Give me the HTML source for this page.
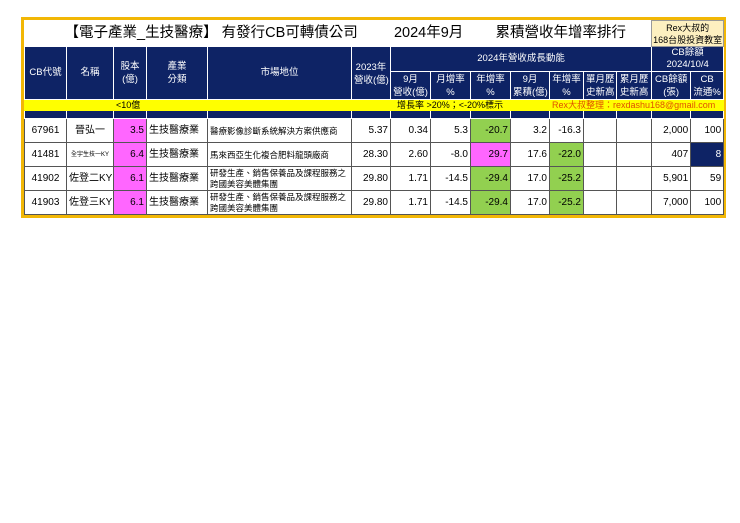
<!DOCTYPE html>
<html><head><meta charset="utf-8"><style>
body{margin:0;width:740px;height:523px;background:#fff;position:relative;font-family:"Liberation Sans","Noto Sans CJK TC",sans-serif;}
.wrap{position:absolute;left:21px;top:17px;width:699px;border:3px solid #f2b705;background:#fff;}
table{border-collapse:collapse;table-layout:fixed;width:699px;}
td{border:1px solid #555;padding:0 2px;font-size:9px;line-height:10px;white-space:nowrap;overflow:hidden;}
.h td{background:#0e2365;color:#fff;text-align:center;border-color:#fff;font-size:9.5px;}
.title td{height:25px;border:none;font-size:14.5px;background:#fff;}
.y td{background:#ffff00;height:10px;font-size:9px;border-color:#ffff00;}
.n td{background:#0e2365;height:7px;border-color:#fff;}
.d td{height:23px;text-align:right;font-size:10px;}
.c{text-align:center!important}.l{text-align:left!important}
.m{font-size:8.5px!important;}
.pk{background:#ff66ff}.gr{background:#92d050}.nv{background:#0e2365;color:#fff}
</style></head><body><div class="wrap"><table>
<colgroup><col style="width:42px"><col style="width:47px"><col style="width:33px"><col style="width:61px"><col style="width:144px"><col style="width:39px"><col style="width:40px"><col style="width:40px"><col style="width:40px"><col style="width:39px"><col style="width:34px"><col style="width:33px"><col style="width:35px"><col style="width:39px"><col style="width:33px"></colgroup>
<tr class="title"><td colspan="13" style="padding-left:40px">【電子產業_生技醫療】 有發行CB可轉債公司&nbsp;&nbsp;&nbsp;&nbsp;&nbsp;&nbsp;&nbsp;&nbsp;&nbsp;2024年9月&nbsp;&nbsp;&nbsp;&nbsp;&nbsp;&nbsp;&nbsp;&nbsp;累積營收年增率排行</td><td colspan="2" style="background:#fdf0c0;text-align:center;font-size:9px;line-height:12px;border:1px solid #999;padding:0">Rex大叔的<br>168台股投資教室</td></tr>
<tr class="h"><td rowspan="2" style="height:52px">CB代號</td><td rowspan="2">名稱</td><td rowspan="2" style="line-height:13px">股本<br>(億)</td><td rowspan="2" style="line-height:13px">產業<br>分類</td><td rowspan="2">市場地位</td><td rowspan="2" style="line-height:13px;vertical-align:bottom;padding-bottom:12px">2023年<br>營收(億)</td><td colspan="7" style="height:20px">2024年營收成長動能</td><td colspan="2" style="line-height:12px">CB餘額<br>2024/10/4</td></tr>
<tr class="h"><td style="line-height:13px">9月<br>營收(億)</td><td style="line-height:13px">月增率<br>%</td><td style="line-height:13px">年增率<br>%</td><td style="line-height:13px">9月<br>累積(億)</td><td style="line-height:13px">年增率<br>%</td><td style="line-height:13px">單月歷<br>史新高</td><td style="line-height:13px">累月歷<br>史新高</td><td style="line-height:13px">CB餘額<br>(張)</td><td style="line-height:13px">CB<br>流通%</td></tr>
<tr class="y"><td></td><td></td><td colspan="2">&lt;10億</td><td colspan="2"></td><td colspan="4" style="padding-left:6px">增長率 &gt;20%；&lt;-20%標示</td><td colspan="5" style="color:#e05000;text-align:right;padding-right:8px">Rex大叔整理：rexdashu168@gmail.com</td></tr>
<tr class="n"><td></td><td></td><td></td><td></td><td></td><td></td><td></td><td></td><td></td><td></td><td></td><td></td><td></td><td></td><td></td></tr>
<tr class="d"><td class="c">67961</td><td class="c">晉弘一</td><td class="pk">3.5</td><td class="l">生技醫療業</td><td class="l m">醫療影像診斷系統解決方案供應商</td><td>5.37</td><td>0.34</td><td>5.3</td><td class="gr">-20.7</td><td>3.2</td><td>-16.3</td><td></td><td></td><td>2,000</td><td>100</td></tr>
<tr class="d"><td class="c">41481</td><td class="c" style="font-size:6px">全宇生技一KY</td><td class="pk">6.4</td><td class="l">生技醫療業</td><td class="l m">馬來西亞生化複合肥料龍頭廠商</td><td>28.30</td><td>2.60</td><td>-8.0</td><td class="pk">29.7</td><td>17.6</td><td class="gr">-22.0</td><td></td><td></td><td>407</td><td class="nv">8</td></tr>
<tr class="d"><td class="c">41902</td><td class="c">佐登二KY</td><td class="pk">6.1</td><td class="l">生技醫療業</td><td class="l m" style="line-height:11px">研發生產、銷售保養品及課程服務之<br>跨國美容美體集團</td><td>29.80</td><td>1.71</td><td>-14.5</td><td class="gr">-29.4</td><td>17.0</td><td class="gr">-25.2</td><td></td><td></td><td>5,901</td><td>59</td></tr>
<tr class="d"><td class="c">41903</td><td class="c">佐登三KY</td><td class="pk">6.1</td><td class="l">生技醫療業</td><td class="l m" style="line-height:11px">研發生產、銷售保養品及課程服務之<br>跨國美容美體集團</td><td>29.80</td><td>1.71</td><td>-14.5</td><td class="gr">-29.4</td><td>17.0</td><td class="gr">-25.2</td><td></td><td></td><td>7,000</td><td>100</td></tr>
</table></div></body></html>
